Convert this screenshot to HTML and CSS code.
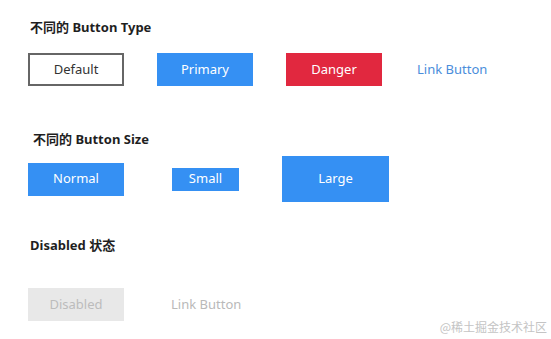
FILE: index.html
```html
<!DOCTYPE html>
<html lang="zh-CN">
<head>
    <meta charset="UTF-8">
    <meta name="viewport" content="width=device-width, initial-scale=1.0">
    <title>Button</title>
    <link rel="stylesheet" href="styles.css">
</head>
<body>
    <div class="page">
        <!-- Types -->
        <h3 class="title title-type">不同的 Button Type</h3>
        <div class="row row-type">
            <button class="btn btn-default">Default</button>
            <button class="btn btn-primary">Primary</button>
            <button class="btn btn-danger">Danger</button>
            <button class="btn btn-link">Link Button</button>
        </div>

        <!-- Sizes -->
        <h3 class="title title-size">不同的 Button Size</h3>
        <div class="row row-size">
            <button class="btn btn-primary">Normal</button>
            <button class="btn btn-primary btn-sm">Small</button>
            <button class="btn btn-primary btn-lg">Large</button>
        </div>

        <!-- Disabled -->
        <h3 class="title title-disabled">Disabled 状态</h3>
        <div class="row row-disabled">
            <button class="btn btn-disabled" disabled>Disabled</button>
            <button class="btn btn-link" disabled>Link Button</button>
        </div>
    </div>

    <div class="watermark">@稀土掘金技术社区</div>
</body>
</html>
```

FILE: styles.css
```css
body, html {
    margin: 0;
    padding: 0;
    background: #fff;
    height: 100%;
    overflow: hidden;
}

body {
    font-family: "Noto Sans", "Noto Sans CJK SC", sans-serif;
    color: #222;
}

.page {
    padding: 17px 0 0 28px;
}

/* Section titles */
.title {
    margin: 0;
    font-size: 13px;
    font-weight: 700;
    line-height: 20px;
    color: #1f1f1f;
    padding-left: 2px;
}

.title-size {
    margin-top: 43px;
    padding-left: 5px;
}

.title-disabled {
    margin-top: 33px;
}

.row {
    display: flex;
    align-items: center;
}

.row-type {
    margin-top: 16px;
    gap: 33px;
}

.row-type .btn-link {
    margin-left: 2px;
}

.row-size {
    margin-top: 7px;
    height: 46px;
}

.row-size .btn-sm {
    margin-left: 48px;
}

.row-size .btn-lg {
    margin-left: 43px;
}

.row-disabled {
    margin-top: 33px;
    gap: 47px;
}

/* Buttons */
.btn {
    box-sizing: border-box;
    width: 96px;
    height: 33px;
    border: none;
    padding: 0 0 2px;
    font-family: inherit;
    font-size: 13px;
    color: #fff;
    cursor: pointer;
}

.btn-default {
    background: #fff;
    border: 2px solid #666;
    color: #333;
}

.btn-primary {
    background: #3590f3;
}

.btn-danger {
    background: #e1283f;
}

.btn-link {
    width: auto;
    background: none;
    color: #4a8ddb;
}

.btn-sm {
    width: 67px;
    height: 23px;
}

.btn-lg {
    width: 107px;
    height: 46px;
}

.btn-disabled {
    background: #e8e8e8;
    color: #bcbcbc;
    cursor: not-allowed;
}

.btn-link:disabled {
    color: #b9b9b9;
    cursor: not-allowed;
}

/* Watermark over the corner */
.watermark {
    position: absolute;
    right: 4px;
    bottom: 4px;
    font-family: "Noto Sans CJK SC", sans-serif;
    font-size: 12px;
    color: #c4c4c4;
}
```
